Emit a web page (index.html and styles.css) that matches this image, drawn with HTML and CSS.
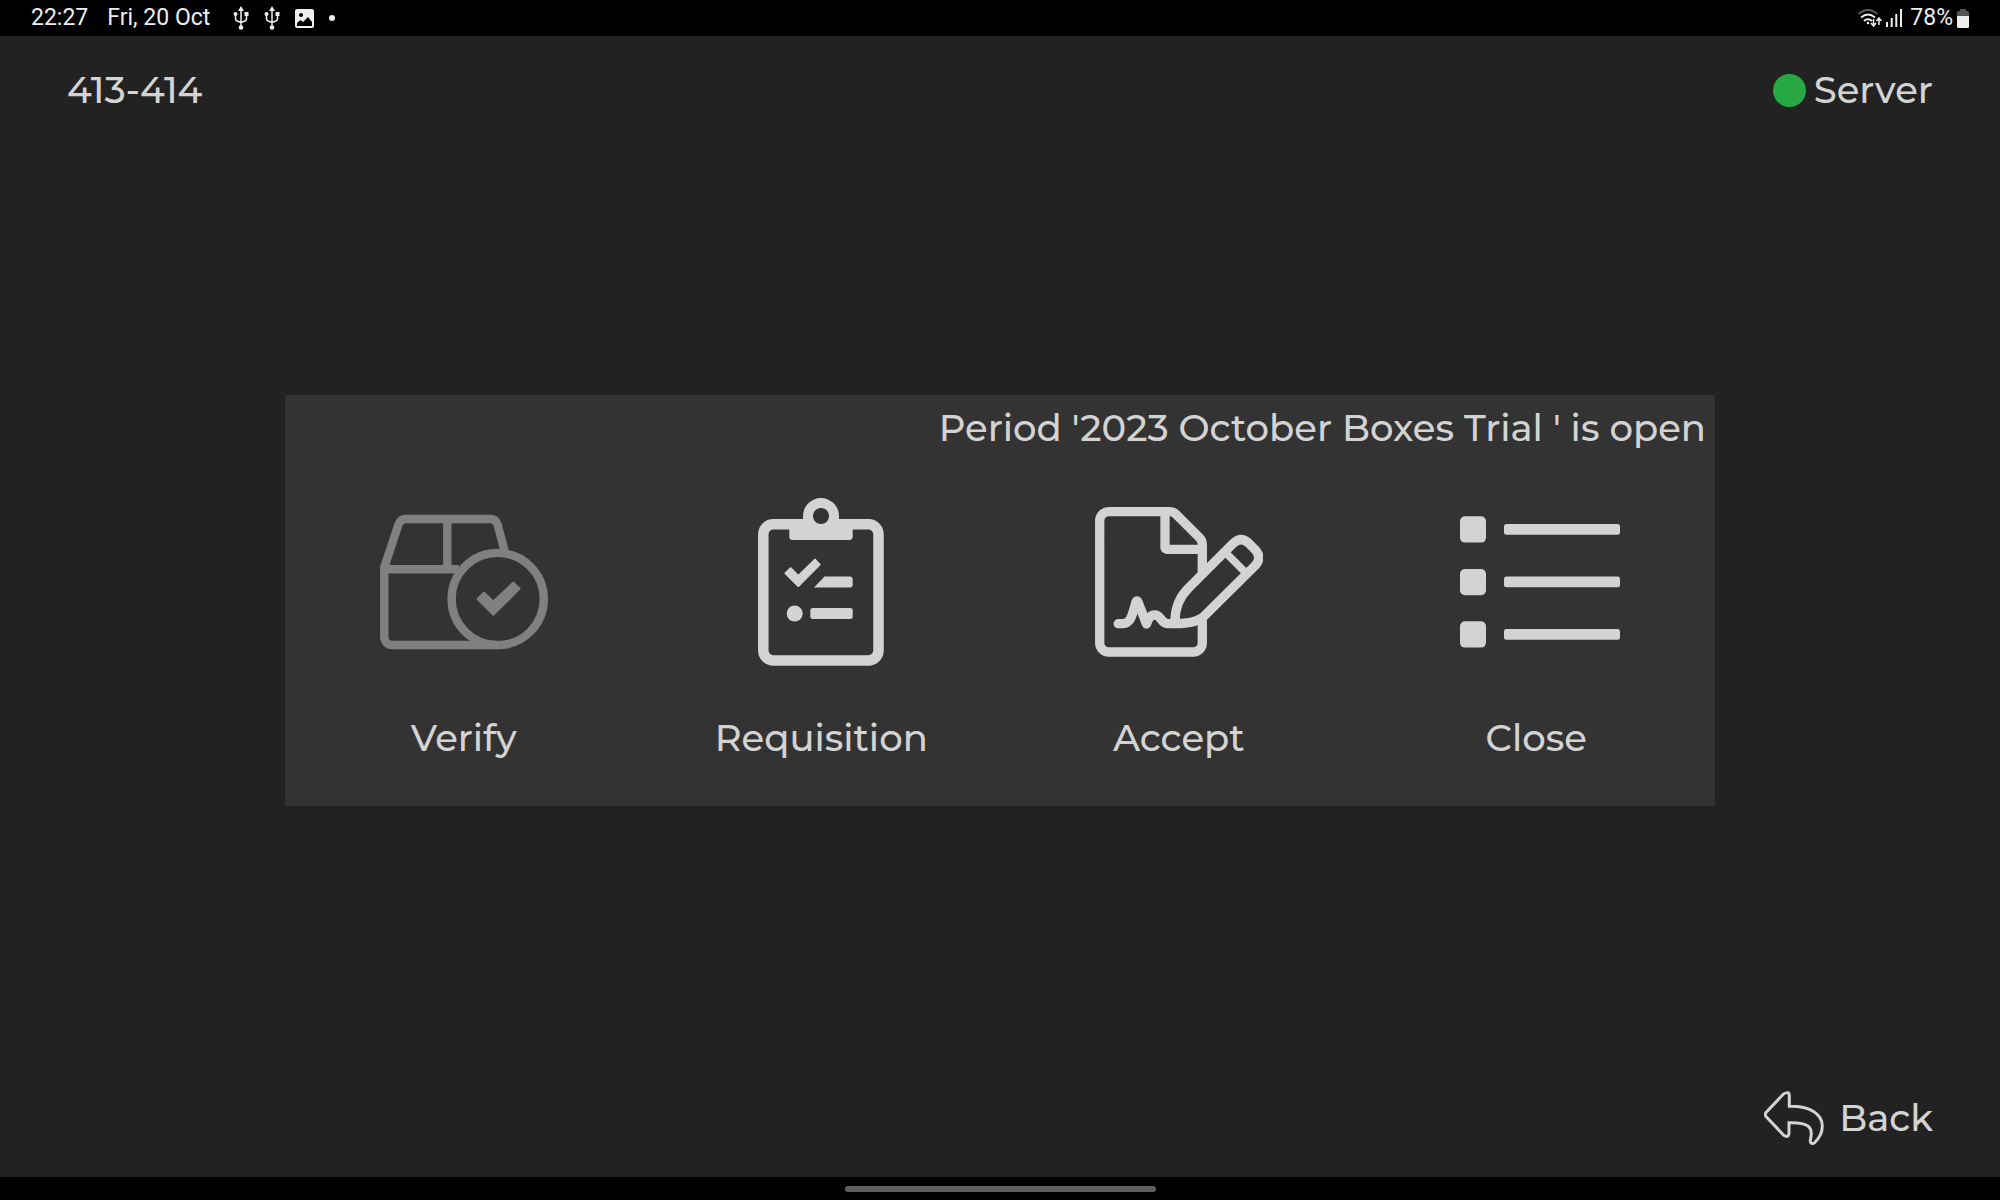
FILE: index.html
```html
<!DOCTYPE html>
<html lang="en">
<head>
<meta charset="UTF-8">
<meta name="viewport" content="width=device-width, initial-scale=1.0">
<title>413-414</title>
<link rel="stylesheet" href="styles.css">
</head>
<body>
<div class="status_bar">
    <div class="status_left">
        <span class="time">22:27</span>
        <span class="date">Fri, 20 Oct</span>
        <svg class="usb" viewBox="0 0 16 24" width="16" height="24">
            <path d="M8 4v17M2.5 9v3.5q0 2.5 3 3l2.500 1M13.500 9v3.500q0 2.500-3 3L8 16.500" fill="none" stroke="currentColor" stroke-width="1.500"/>
            <path d="M8 0l3 5H5z"/>
            <circle cx="8" cy="21.500" r="2.300"/>
            <circle cx="2.500" cy="8" r="2"/>
            <path d="M11.500 6h4v4h-4z"/>
        </svg>
        <svg class="usb" viewBox="0 0 16 24" width="16" height="24">
            <path d="M8 4v17M2.5 9v3.5q0 2.5 3 3l2.500 1M13.500 9v3.500q0 2.500-3 3L8 16.500" fill="none" stroke="currentColor" stroke-width="1.500"/>
            <path d="M8 0l3 5H5z"/>
            <circle cx="8" cy="21.500" r="2.300"/>
            <circle cx="2.500" cy="8" r="2"/>
            <path d="M11.500 6h4v4h-4z"/>
        </svg>
        <svg class="photo" viewBox="0 0 19 19" width="19" height="19">
            <path fill-rule="evenodd" d="M2 0h15a2 2 0 0 1 2 2v15a2 2 0 0 1-2 2H2a2 2 0 0 1-2-2V2a2 2 0 0 1 2-2zM6 4a2 2 0 1 0 .01 0zM2 17h15v-4l-4-5-5 5-2.500-2L2 14z"/>
        </svg>
        <span class="more"></span>
    </div>
    <div class="status_right">
        <svg class="wifi" viewBox="0 0 24 18" width="24" height="18">
            <g fill="none" stroke="currentColor" stroke-width="1.800">
                <path d="M.5 5Q10 -3 19.500 5" opacity=".4"/>
                <path d="M3 8.500q7-6 14 0M6 12q4-3.500 8 0"/>
                <path d="M15.500 10v7M13 14l2.500 3 2.500-3M21 16V9.500M18.500 12L21 9l2.500 3" stroke-width="1.500"/>
            </g>
            <circle cx="10" cy="14" r="1.300"/>
        </svg>
        <svg class="signal" viewBox="0 0 16 18" width="16" height="18">
            <path d="M0 13h2v5H0zM4.700 9h2v9h-2zM9.300 5h2v13h-2zM14 0h2v18h-2z"/>
        </svg>
        <span class="percent">78%</span>
        <svg class="battery" viewBox="0 0 12 19" width="12" height="19">
            <path d="M3 0h6v2h1.500A1.500 1.500 0 0 1 12 3.500V7H0V3.500A1.500 1.500 0 0 1 1.500 2H3z" opacity=".35"/>
            <path d="M0 7h12v10.500a1.500 1.500 0 0 1-1.500 1.500h-9A1.500 1.500 0 0 1 0 17.500z"/>
        </svg>
    </div>
</div>

<main class="screen">
    <header class="top">
        <h1 class="table_name">413-414</h1>
        <div class="server"><span class="server_dot"></span>Server</div>
    </header>

    <section class="panel">
        <h2 class="period">Period '2023 October Boxes Trial ' is open</h2>
        <div class="menu">
            <button type="button" class="menu_item" disabled>
                <svg class="icon" viewBox="0 0 168 168">
                    <g fill="none" stroke="currentColor" stroke-width="8.400">
                        <path d="M117.700 147H12.300a8 8 0 0 1-8-8V69.500L18.500 26.500Q20.300 21 26 21h84.500q5.200 0 7 5.500l7 26"/>
                        <path d="M4.300 71.300H79M67.300 21v50"/>
                        <circle cx="117.700" cy="101" r="46.100"/>
                    </g>
                    <path d="M98 101l6-6 9.300 8.800L133.300 85l6 5.700-26 25.700z" stroke="currentColor" stroke-width="2.500" stroke-linejoin="round"/>
                </svg>
                <span>Verify</span>
            </button>
            <button type="button" class="menu_item">
                <svg class="icon" viewBox="0 0 168 168">
                    <path d="M100 26.300h31.500a10 10 0 0 1 10 10v116.200a10 10 0 0 1-10 10H36.300a10 10 0 0 1-10-10V36.300a10 10 0 0 1 10-10H68" fill="none" stroke="currentColor" stroke-width="10.500"/>
                    <path fill-rule="evenodd" d="M66 21v-3a18 18 0 0 1 36 0v3h13.700v17.500a3.500 3.500 0 0 1-3.500 3.500H55.800a3.500 3.500 0 0 1-3.500-3.500V21zM84 10a8 8 0 1 0 .01 0z"/>
                    <path d="M48.500 75.300l5.200-5 7.600 7.600L78 61.600l4.700 5-21.400 21.400z" stroke="currentColor" stroke-width="2" stroke-linejoin="round"/>
                    <path d="M87.500 78.500h25.200a3 3 0 0 1 3 3v5a3 3 0 0 1-3 3H77z"/>
                    <circle cx="57.700" cy="115.500" r="8"/>
                    <rect x="73.300" y="110" width="42.400" height="11" rx="2.500"/>
                </svg>
                <span>Requisition</span>
            </button>
            <button type="button" class="menu_item">
                <svg class="icon" viewBox="0 0 168 168">
                    <g fill="none" stroke="currentColor" stroke-width="9.300" stroke-linejoin="round">
                        <path d="M107.300 120v25a9 9 0 0 1-9 9H13.700a9 9 0 0 1-9-9V22.700a9 9 0 0 1 9-9H75q3.500 0 6 2.500L104.300 39.500q3 3 3 7V77"/>
                        <path d="M70 13.700v36a1.600 1.600 0 0 0 1.600 1.600H107"/>
                        <path d="M80 125.700C79.500 111 84 99.600 93.300 90.300L138.300 45.300Q146 38 153.500 45L160.700 52.200Q167 59.500 160.700 67L110 117.300Q102 125.700 80 125.700z"/>
                        <path d="M132.500 56.500l16.500 16.500" stroke-width="7.500"/>
                        <path d="M23.200 125.700H27C34 125.700 36.500 120 38.500 112.500L41 104Q42 102 43 104L51.500 126C54 119 56 117 60 117C66 117 66 125.700 73 125.700h7" stroke-linecap="round"/>
                    </g>
                </svg>
                <span>Accept</span>
            </button>
            <button type="button" class="menu_item">
                <svg class="icon" viewBox="0 0 168 168">
                    <rect x="8" y="18.300" width="26" height="26.300" rx="5"/>
                    <rect x="8" y="71" width="26" height="26.300" rx="5"/>
                    <rect x="8" y="123.300" width="26" height="26.300" rx="5"/>
                    <rect x="52" y="26" width="116" height="10.800" rx="2.500"/>
                    <rect x="52" y="78.500" width="116" height="10.800" rx="2.500"/>
                    <rect x="52" y="131" width="116" height="10.800" rx="2.500"/>
                </svg>
                <span>Close</span>
            </button>
        </div>
    </section>

    <footer class="bottom">
        <button type="button" class="back">
            <svg viewBox="0 0 60 54" width="60" height="54">
                <path d="M2 21.500L19.500 3q5.800-3.500 5.800 2v10.300C46 15 58.300 23 58.300 35q0 9-7.300 16.300c-3 2.500-5.500 1-4.500-3 3-12-1.500-17-21.500-16.600V41q0 7-5.500 3L2 25.500q-1.500-2 0-4z" fill="none" stroke="currentColor" stroke-width="3"/>
            </svg>
            <span>Back</span>
        </button>
    </footer>
</main>

<div class="nav_bar"><span class="handle"></span></div>
</body>
</html>
```

FILE: styles.css
```css
* {margin: 0; padding: 0; box-sizing: border-box;}
body {
    display: flex;
    flex-direction: column;
    min-height: 100vh;
    background: #222;
    color: #d3d3d3;
    font: 500 37px/46px Montserrat, Inter, sans-serif;
}
h1, h2, button {
    font: inherit;
    color: inherit;
}
button {
    border: 0;
    background: none;
    cursor: pointer;
}
svg {
    display: block;
    fill: currentColor;
}

/* status bar */
.status_bar {
    display: flex;
    justify-content: space-between;
    height: 36px;
    padding: 0 31px;
    background: #000;
    color: #eee;
    font: 400 23px/36px Roboto, sans-serif;
}
.status_left, .status_right {
    display: flex;
    align-items: center;
}
.status_left {gap: 15px;}
.date {
    margin: 0 8px 0 4px;
}
.more {
    width: 6px;
    height: 6px;
    border-radius: 50%;
    background: #eee;
}
.status_right {gap: 4px;}
.percent {margin-left: 4px;}

/* screen */
.screen {
    flex: 1;
    display: grid;
    grid-template-rows: 1fr auto 1fr;
    padding-bottom: 12px;
}
.top {
    display: flex;
    justify-content: space-between;
    align-items: flex-start;
    padding: 31px 67px 0;
}
.server {
    display: flex;
    align-items: center;
    gap: 8px;
}
.server_dot {
    width: 33px;
    height: 33px;
    border-radius: 50%;
    background: #28a745;
}
.panel {
    width: 71.5%;
    margin: 0 auto;
    padding: 10px 0 45px;
    background: #333;
}
.period {
    padding: 0 9px;
    text-align: right;
}
.menu {
    display: grid;
    grid-template-columns: repeat(4, 1fr);
    margin-top: 47px;
}
.menu_item {
    display: flex;
    flex-direction: column;
    align-items: center;
    gap: 49px;
}
.icon {
    width: 168px;
    height: 168px;
}
.menu_item:disabled .icon {
    color: #808080;
}
.bottom {
    display: flex;
    justify-content: flex-end;
    align-items: flex-end;
    padding: 0 67px 20px;
}
.back {
    display: flex;
    align-items: center;
    gap: 15px;
}

/* gesture bar */
.nav_bar {
    display: flex;
    justify-content: center;
    align-items: center;
    height: 23px;
    background: #000;
}
.handle {
    width: 311px;
    height: 6px;
    border-radius: 3px;
    background: #5f5f5f;
}
```
